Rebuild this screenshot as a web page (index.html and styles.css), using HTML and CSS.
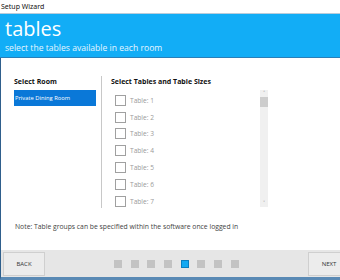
FILE: index.html
```html
<!DOCTYPE html>
<html>
<head>
	<title>Setup Wizard</title>
	<link rel="stylesheet" href="styles.css">
</head>
<body>
	<div class="titlebar">Setup Wizard</div>

	<div class="header">
		<h1>tables</h1>
		<p>select the tables available in each room</p>
	</div>

	<div class="content">
		<div class="columns">
			<div class="rooms">
				<p class="label">Select Room</p>
				<div class="room selected">Private Dining Room</div>
			</div>

			<div class="tables">
				<p class="label">Select Tables and Table Sizes</p>
				<div class="scrollbox">
					<ul class="table_list">
						<li><span class="check"></span>Table: 1</li>
						<li><span class="check"></span>Table: 2</li>
						<li><span class="check"></span>Table: 3</li>
						<li><span class="check"></span>Table: 4</li>
						<li><span class="check"></span>Table: 5</li>
						<li><span class="check"></span>Table: 6</li>
						<li><span class="check"></span>Table: 7</li>
					</ul>
					<div class="scrollbar">
						<span class="arrow">&#708;</span>
						<div class="track"><div class="thumb"></div></div>
						<span class="arrow">&#709;</span>
					</div>
				</div>
			</div>
		</div>

		<p class="note">Note: Table groups can be specified within the software once logged in</p>
	</div>

	<div class="footer">
		<button type="button" class="nav_btn">BACK</button>
		<div class="steps">
			<span class="step"></span>
			<span class="step"></span>
			<span class="step"></span>
			<span class="step"></span>
			<span class="step current"></span>
			<span class="step"></span>
			<span class="step"></span>
			<span class="step"></span>
		</div>
		<button type="button" class="nav_btn next">NEXT</button>
	</div>
</body>
</html>
```

FILE: styles.css
```css
html, body{
	margin: 0;
	padding: 0;
}
body{
	width: 340px;
	height: 280px;
	overflow: hidden;
	background-color: #fff;
	font-family: "Open Sans", "Noto Sans", sans-serif;
}
.titlebar{
	height: 14px;
	box-sizing: border-box;
	border-bottom: 1px solid #b8ccdb;
	padding-left: 1px;
	font: 7px/13px "Noto Sans", sans-serif;
	color: #111;
}
.header{
	background-color: #12adf6;
	height: 43px;
	border-bottom: 1px solid #2a7fb8;
	padding-left: 5px;
	color: #fff;
}
.header h1{
	margin: 0;
	font-weight: normal;
	font-size: 20px;
	line-height: 26px;
	padding-top: 2px;
}
.header p{
	margin: 0;
	font-size: 8.6px;
	line-height: 12px;
	color: #e6f6ff;
}
.content{
	height: 192px;
	border-left: 1px solid #2f5f8c;
	box-sizing: border-box;
	padding: 18px 0 0 13px;
}
.columns{
	display: flex;
	height: 134px;
}
.label{
	margin: 0 0 3px 0;
	font-size: 7px;
	font-weight: bold;
	line-height: 11px;
	color: #111;
}
.rooms{
	width: 82px;
	margin-right: 5px;
}
.room{
	height: 16px;
	padding-left: 1px;
	font-size: 5.8px;
	line-height: 16px;
	color: #fff;
}
.room.selected{
	background-color: #0a78d8;
}
.tables{
	border-left: 1px solid #c8c8c8;
	padding-left: 9px;
	height: 132px;
}
.scrollbox{
	display: flex;
	width: 157px;
}
.table_list{
	list-style: none;
	margin: 0;
	padding: 2px 0 0 4px;
	flex: 1;
}
.table_list li{
	height: 16.8px;
	display: flex;
	align-items: center;
	font-size: 6.6px;
	color: #9a9a9a;
}
.check{
	width: 9px;
	height: 9px;
	border: 1px solid #a0a0a0;
	background-color: #fff;
	margin-right: 4px;
}
.scrollbar{
	width: 8px;
	height: 117px;
	background-color: #f0f0f0;
	display: flex;
	flex-direction: column;
	align-items: center;
}
.arrow{
	font-size: 6px;
	line-height: 7px;
	color: #777;
}
.track{
	flex: 1;
	width: 100%;
}
.thumb{
	height: 10px;
	background-color: #cdcdcd;
}
.note{
	margin: 12px 0 0 1px;
	font-size: 6.8px;
	color: #444;
}
.footer{
	height: 30px;
	background-color: #e6e6e6;
	border-left: 1px solid #2f5f8c;
	border-bottom: 3px solid #5a8ab5;
	box-sizing: border-box;
	display: flex;
	align-items: center;
	padding: 0 0 0 2px;
}
.nav_btn{
	width: 42px;
	height: 24px;
	background-color: #ececec;
	border: 1px solid #cfcfcf;
	font: 6px "Open Sans", sans-serif;
	color: #333;
	padding: 0;
	margin-top: 1px;
	flex-shrink: 0;
}
.nav_btn.next{
	margin-left: auto;
	margin-right: -10px;
}
.steps{
	display: flex;
	gap: 8.7px;
	margin-left: 69px;
}
.step{
	width: 8px;
	height: 8px;
	background-color: #c3c3c3;
}
.step.current{
	background-color: #13a9f2;
	border: 1px solid #0b7fc0;
	box-sizing: border-box;
}
```
